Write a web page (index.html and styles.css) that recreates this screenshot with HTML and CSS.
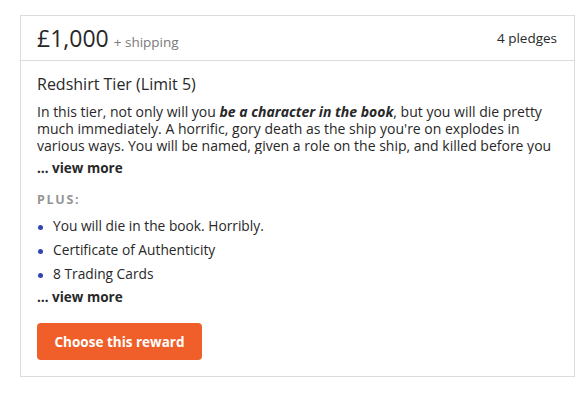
FILE: index.html
```html
<!DOCTYPE html>
<html lang="en">
<head>
    <meta charset="UTF-8">
    <meta name="viewport" content="width=device-width, initial-scale=1.0">
    <title>Redshirt Tier</title>
    <link rel="stylesheet" href="styles.css">
</head>
<body>
    <div class="reward-card">
        <div class="reward-header">
            <div class="price">
                <span class="amount">£1,000</span>
                <span class="shipping">+ shipping</span>
            </div>
            <div class="pledges">4 pledges</div>
        </div>

        <div class="reward-body">
            <h3 class="reward-title">Redshirt Tier (Limit 5)</h3>
            <p class="description">In this tier, not only will you <b><i>be a character in the book</i></b>, but you will die pretty<br>much immediately. A horrific, gory death as the ship you're on explodes in<br>various ways. You will be named, given a role on the ship, and killed before you</p>
            <div class="view-more">… view more</div>

            <div class="plus-label">PLUS:</div>
            <ul class="items">
                <li>You will die in the book. Horribly.</li>
                <li>Certificate of Authenticity</li>
                <li>8 Trading Cards</li>
            </ul>
            <div class="view-more">… view more</div>

            <button class="choose-btn">Choose this reward</button>
        </div>
    </div>
</body>
</html>
```

FILE: styles.css
```css
body {
    font-family: "Open Sans", Lato, sans-serif;
    margin: 0;
    padding: 15px 0 0 20px;
    background-color: #fff;
    color: #282828;
}
.reward-card {
    width: 553px;
    border: 1px solid #dcdcdc;
}
.reward-header {
    height: 44px;
    padding: 0 17px 0 16px;
    display: flex;
    align-items: center;
    justify-content: space-between;
    border-bottom: 1px solid #dcdcdc;
}
.price {
    display: flex;
    align-items: baseline;
    gap: 5px;
}
.amount {
    font-size: 23px;
    font-weight: 500;
    color: #282828;
}
.shipping {
    font-size: 13.5px;
    color: #7a7a7a;
}
.pledges {
    font-size: 13.5px;
    color: #282828;
}
.reward-body {
    padding: 13px 17px 16px 16px;
}
.reward-title {
    margin: 0;
    font-size: 16px;
    font-weight: 400;
    line-height: 20px;
}
.description {
    margin: 9px 0 0;
    font-size: 14px;
    line-height: 17px;
    height: 51px;
    overflow: hidden;
    white-space: nowrap;
}
.description b {
    font-weight: 700;
}
.view-more {
    margin-top: 6px;
    font-size: 13.5px;
    font-weight: 700;
    line-height: 17px;
}
.plus-label {
    margin-top: 15px;
    font-size: 12.5px;
    font-weight: 700;
    letter-spacing: 1.7px;
    color: #959595;
    line-height: 16px;
}
.items {
    list-style: none;
    margin: 6px 0 0;
    padding: 0;
}
.items li {
    font-size: 13.75px;
    line-height: 24px;
    padding-left: 16px;
    position: relative;
}
.items li::before {
    content: "";
    position: absolute;
    left: 1px;
    top: 11px;
    width: 5px;
    height: 5px;
    border-radius: 50%;
    background-color: #3245b0;
}
.items + .view-more {
    margin-top: 3px;
}
.choose-btn {
    margin-top: 17px;
    width: 165px;
    height: 37px;
    background-color: #f05f2a;
    color: #fff;
    border: none;
    border-radius: 4px;
    font-family: "Open Sans", Lato, sans-serif;
    font-size: 13.5px;
    font-weight: 700;
    cursor: pointer;
}
```
